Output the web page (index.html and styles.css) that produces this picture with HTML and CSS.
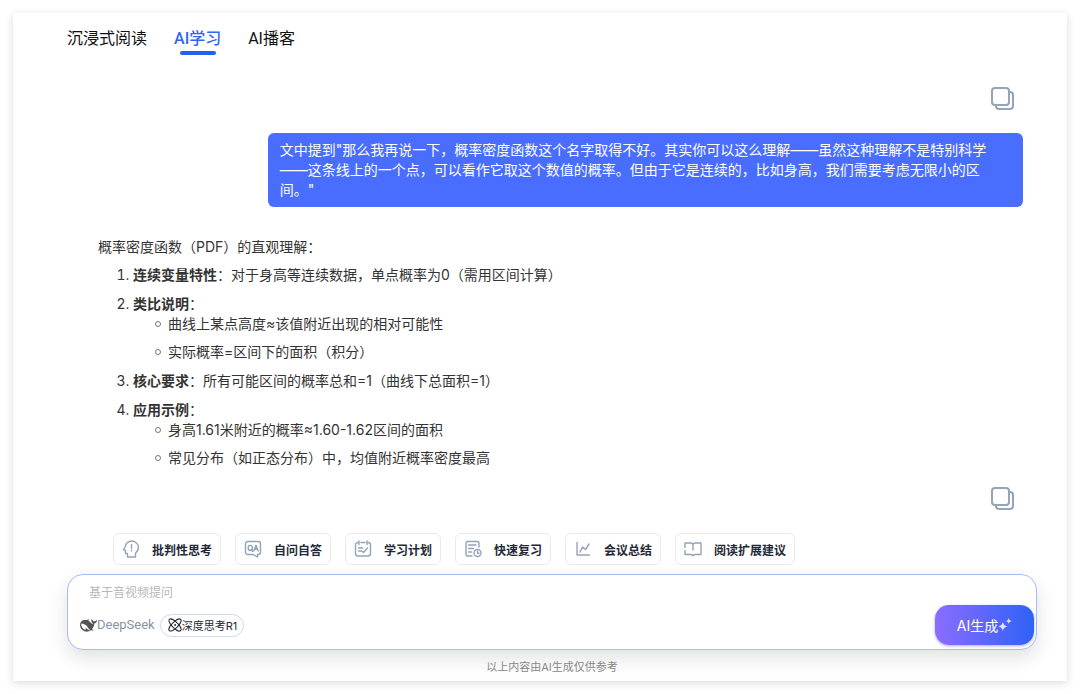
FILE: index.html
```html
<!DOCTYPE html>
<html lang="zh-CN">
<head>
    <meta charset="UTF-8">
    <meta name="viewport" content="width=device-width, initial-scale=1.0">
    <title>AI学习</title>
    <link rel="stylesheet" href="styles.css">
</head>
<body>
    <div class="card">
        <nav class="tabs">
            <a href="#read" class="tab">沉浸式阅读</a>
            <a href="#learn" class="tab active">AI学习</a>
            <a href="#podcast" class="tab">AI播客</a>
        </nav>

        <main class="chat">
            <button class="copy-btn" aria-label="复制">
                <svg width="24" height="24" viewBox="0 0 24 24"><rect x="2" y="2" width="17" height="17" rx="3"/><path d="M19 6h1a3 3 0 0 1 3 3v11a3 3 0 0 1-3 3H9a3 3 0 0 1-3-3v-1"/></svg>
            </button>

            <div class="question">文中提到"那么我再说一下，概率密度函数这个名字取得不好。其实你可以这么理解——虽然这种理解不是特别科学——这条线上的一个点，可以看作它取这个数值的概率。但由于它是连续的，比如身高，我们需要考虑无限小的区间。"</div>

            <div class="answer">
                <p>概率密度函数（PDF）的直观理解：</p>
                <ol>
                    <li><strong>连续变量特性</strong>：对于身高等连续数据，单点概率为0（需用区间计算）</li>
                    <li><strong>类比说明</strong>：
                        <ul>
                            <li>曲线上某点高度≈该值附近出现的相对可能性</li>
                            <li>实际概率=区间下的面积（积分）</li>
                        </ul>
                    </li>
                    <li><strong>核心要求</strong>：所有可能区间的概率总和=1（曲线下总面积=1）</li>
                    <li><strong>应用示例</strong>：
                        <ul>
                            <li>身高1.61米附近的概率≈1.60-1.62区间的面积</li>
                            <li>常见分布（如正态分布）中，均值附近概率密度最高</li>
                        </ul>
                    </li>
                </ol>
            </div>

            <button class="copy-btn" aria-label="复制">
                <svg width="24" height="24" viewBox="0 0 24 24"><rect x="2" y="2" width="17" height="17" rx="3"/><path d="M19 6h1a3 3 0 0 1 3 3v11a3 3 0 0 1-3 3H9a3 3 0 0 1-3-3v-1"/></svg>
            </button>
        </main>

        <div class="shortcuts">
            <button class="shortcut">
                <svg width="18" height="18" viewBox="0 0 18 18"><path d="M5.500 17v-3.500H3.500v-3L1.500 9.500 3.200 6.500A6.600 6.600 0 1 1 13.500 13v4z"/><path d="M9.500 4.500v4M9.500 10.300v.8"/></svg>
                批判性思考
            </button>
            <button class="shortcut">
                <svg width="18" height="18" viewBox="0 0 18 18"><path d="M4 1.500h10a2.500 2.500 0 0 1 2.500 2.500v8a2.500 2.500 0 0 1-2.500 2.500h-.5V17L9 14.500H4A2.500 2.500 0 0 1 1.500 12V4A2.500 2.500 0 0 1 4 1.500z"/><ellipse cx="6.300" cy="8" rx="2.100" ry="2.600"/><path d="M7 9.500l1.500 1.700M9.800 11l2.200-5.700 2.200 5.700M10.500 9.300h3"/></svg>
                自问自答
            </button>
            <button class="shortcut">
                <svg width="18" height="18" viewBox="0 0 18 18"><path d="M5 2.500H4A2.500 2.500 0 0 0 1.500 5v8.500A2.500 2.500 0 0 0 4 16h10a2.500 2.500 0 0 0 2.500-2.500V5A2.500 2.500 0 0 0 14 2.500h-1M7 2.500h4M5 1v3.500M13 1v3.500M4.500 8h4M4.500 11h3l2 1.500L13.500 8"/></svg>
                学习计划
            </button>
            <button class="shortcut">
                <svg width="18" height="18" viewBox="0 0 18 18"><path d="M15 7V3a1.500 1.500 0 0 0-1.500-1.500h-10A1.500 1.500 0 0 0 2 3v11.500A1.500 1.500 0 0 0 3.500 16H8M4.500 5h7.500M4.500 8.500h5M4.500 12h3"/><circle cx="13.500" cy="13" r="3.500"/><path d="M13.500 11v2.200H15"/></svg>
                快速复习
            </button>
            <button class="shortcut">
                <svg width="18" height="18" viewBox="0 0 18 18"><path d="M3 2.500v12.500h12.500M6 12l2.500-5 3 2.500L15 4"/></svg>
                会议总结
            </button>
            <button class="shortcut">
                <svg width="18" height="18" viewBox="0 0 18 18"><path d="M1 7.500V3h5.500C8 3 9 3.700 9 5c0-1.300 1-2 2.500-2H17v11.500h-6L9 15.500l-2-1H1V10.500M9 5v5"/></svg>
                阅读扩展建议
            </button>
        </div>

        <form class="ask-box">
            <textarea class="ask-input" rows="1" placeholder="基于音视频提问" aria-label="提问"></textarea>
            <div class="ask-bar">
                <svg class="whale" width="17" height="17" viewBox="0 0 24 24"><path d="M23.748 4.482c-.254-.124-.364.113-.512.234-.051.039-.094.09-.137.136-.372.397-.806.657-1.373.626-.829-.046-1.537.214-2.163.848-.133-.782-.575-1.248-1.247-1.548-.352-.156-.708-.311-.955-.65-.172-.241-.219-.51-.305-.774-.055-.16-.11-.323-.293-.35-.2-.031-.278.136-.356.276-.313.572-.434 1.202-.422 1.84.027 1.436.633 2.58 1.838 3.393.137.093.172.187.129.323-.082.28-.18.552-.266.833-.055.179-.137.217-.329.14a5.526 5.526 0 0 1-1.736-1.18c-.857-.828-1.631-1.742-2.597-2.458a11.365 11.365 0 0 0-.689-.471c-.985-.957.13-1.743.388-1.836.27-.098.093-.432-.779-.428-.872.004-1.67.295-2.687.684a3.055 3.055 0 0 1-.465.137 9.597 9.597 0 0 0-2.883-.102c-1.885.21-3.39 1.102-4.497 2.623C.082 8.606-.231 10.684.152 12.850c.403 2.284 1.569 4.175 3.360 5.653 1.858 1.533 3.997 2.284 6.438 2.140 1.482-.085 3.133-.284 4.994-1.860.47.234.962.327 1.780.397.63.059 1.236-.03 1.705-.128.735-.156.684-.837.419-.961-2.155-1.004-1.682-.595-2.113-.926 1.096-1.296 2.746-2.642 3.392-7.003.05-.347.007-.565 0-.845-.004-.17.035-.237.23-.256a4.173 4.173 0 0 0 1.545-.475c1.396-.763 1.960-2.015 2.093-3.517.02-.23-.004-.467-.247-.588zM11.581 18c-2.089-1.642-3.102-2.183-3.520-2.160-.392.024-.321.471-.235.763.09.288.207.486.371.739.114.167.192.416-.113.603-.673.416-1.842-.14-1.897-.167-1.361-.802-2.500-1.860-3.301-3.307-.774-1.393-1.224-2.887-1.298-4.482-.02-.386.093-.522.477-.592a4.696 4.696 0 0 1 1.529-.039c2.132.312 3.946 1.265 5.468 2.774.868.86 1.525 1.887 2.202 2.891.72 1.066 1.494 2.082 2.480 2.914.348.292.625.514.891.677-.802.09-2.140.11-3.054-.614z"/></svg>
                <span class="model">DeepSeek</span>
                <button type="button" class="think">
                    <svg width="14" height="14" viewBox="0 0 14 14"><ellipse cx="7" cy="7" rx="8" ry="3" transform="rotate(45 7 7)"/><ellipse cx="7" cy="7" rx="8" ry="3" transform="rotate(-45 7 7)"/><circle cx="7" cy="7" r=".5"/></svg>
                    深度思考R1
                </button>
                <button type="submit" class="generate">AI生成<svg width="14" height="14" viewBox="0 0 13 13"><path d="M4.500 3.500c.6 2.700 1.600 3.700 4.300 4.300-2.700.6-3.700 1.600-4.300 4.300C3.900 9.400 2.900 8.400.2 7.800c2.700-.6 3.700-1.600 4.300-4.300zM10 0c.4 1.800 1 2.400 2.800 2.800-1.800.4-2.400 1-2.800 2.800-.4-1.800-1-2.400-2.800-2.800C9 2.400 9.600 1.800 10 0z"/></svg></button>
            </div>
        </form>

        <footer class="note">以上内容由AI生成仅供参考</footer>
    </div>
</body>
</html>
```
FILE: styles.css
```css
* {
    box-sizing: border-box;
}
body {
    margin: 0;
    padding: 13px;
    background: #fff;
    color: #333;
    font-family: Inter, "Noto Sans CJK SC", sans-serif;
    font-size: 14px;
    line-height: 20px;
}
button, textarea {
    font-family: inherit;
    padding: 0;
    border: none;
    background: none;
}
button {
    cursor: pointer;
}
svg {
    flex: none;
    fill: none;
    stroke: #94a3b8;
    stroke-linejoin: round;
    stroke-linecap: round;
}
.card {
    background: #fff;
    box-shadow: 0 2px 8px rgba(0, 0, 0, 0.15);
    padding-bottom: 4px;
}
.tabs {
    display: flex;
    gap: 27px;
    padding: 14px 54px 0;
}
.tab {
    display: flex;
    flex-direction: column;
    align-items: center;
    color: #111;
    font-family: Roboto, "Noto Sans CJK SC", sans-serif;
    font-size: 16px;
    line-height: 24px;
    text-decoration: none;
}
.tab.active {
    color: #2f66f5;
    font-weight: 500;
}
.tab.active::after {
    content: "";
    width: 36px;
    height: 4px;
    border-radius: 2px;
    background: #2860ee;
}
.chat {
    display: flex;
    flex-direction: column;
    align-items: flex-end;
    padding: 31px 44px 0 54px;
}
.copy-btn {
    width: 24px;
    height: 24px;
    margin-right: 9px;
}
.copy-btn svg {
    display: block;
    stroke-width: 2;
}
.question {
    width: 79%;
    margin: 23px 0 30px;
    padding: 7px 12px;
    border-radius: 6px;
    background: #486dff;
    color: #fff;
}
.answer {
    align-self: stretch;
    padding-left: 31px;
    margin-bottom: 18px;
}
.answer p {
    margin: 0 0 8px;
}
.answer ol, .answer ul {
    margin: 0;
    padding-left: 35px;
}
.answer ul {
    list-style: none;
}
.answer li {
    margin-bottom: 8px;
}
.answer ul > li::before {
    content: "";
    display: inline-block;
    width: 4px;
    height: 4px;
    margin: 0 7px 2px -13px;
    border: 1px solid #777;
    border-radius: 50%;
}
.answer ol > li {
    margin-bottom: 9px;
}
.answer ol > li:last-child, .answer ul > li:last-child {
    margin-bottom: 0;
}
.shortcuts {
    display: flex;
    flex-wrap: wrap;
    gap: 14px;
    padding: 23px 100px 9px;
}
.shortcut {
    display: flex;
    align-items: center;
    gap: 12px;
    height: 32px;
    padding: 0 8px;
    border: 1px solid #e8eaed;
    border-radius: 6px;
    color: #1f2937;
    font-size: 12px;
    font-weight: 600;
}
.shortcut svg {
    stroke-width: 1.4;
}
.ask-box {
    margin: 0 30px 0 54px;
    border: 1px solid #a5bcfb;
    border-radius: 16px;
    background: #fff;
    box-shadow: 0 8px 20px rgba(0, 0, 0, 0.12);
}
.ask-input {
    display: block;
    width: 100%;
    height: 30px;
    padding: 8px 21px 0;
    outline: none;
    resize: none;
    font-size: 12px;
    line-height: 20px;
}
.ask-input::placeholder {
    color: #b8b8b8;
}
.ask-bar {
    display: flex;
    align-items: center;
    padding: 0 2px 4px 12px;
}
.whale {
    fill: #555;
    stroke: none;
}
.model {
    color: #8a92a6;
    font-family: Roboto, sans-serif;
    font-size: 13px;
}
.think {
    display: flex;
    align-items: center;
    height: 23px;
    margin-left: 5px;
    padding: 0 6px 0 7px;
    border: 1px solid #d5d9e6;
    border-radius: 12px;
    color: #262c38;
    font-size: 11px;
}
.think svg {
    stroke: #262c38;
}
.generate {
    display: flex;
    align-items: center;
    justify-content: center;
    width: 99px;
    height: 40px;
    margin-left: auto;
    border-radius: 14px;
    background: linear-gradient(90deg, #8b6cff, #2f62f6);
    box-shadow: 0 1px 3px rgba(80, 90, 255, 0.5);
    color: #fff;
    font-size: 14px;
}
.generate svg {
    fill: #dfe4ff;
    stroke: none;
}
.note {
    padding: 7px 30px 0 54px;
    color: #888;
    font-size: 11px;
    text-align: center;
}
```
